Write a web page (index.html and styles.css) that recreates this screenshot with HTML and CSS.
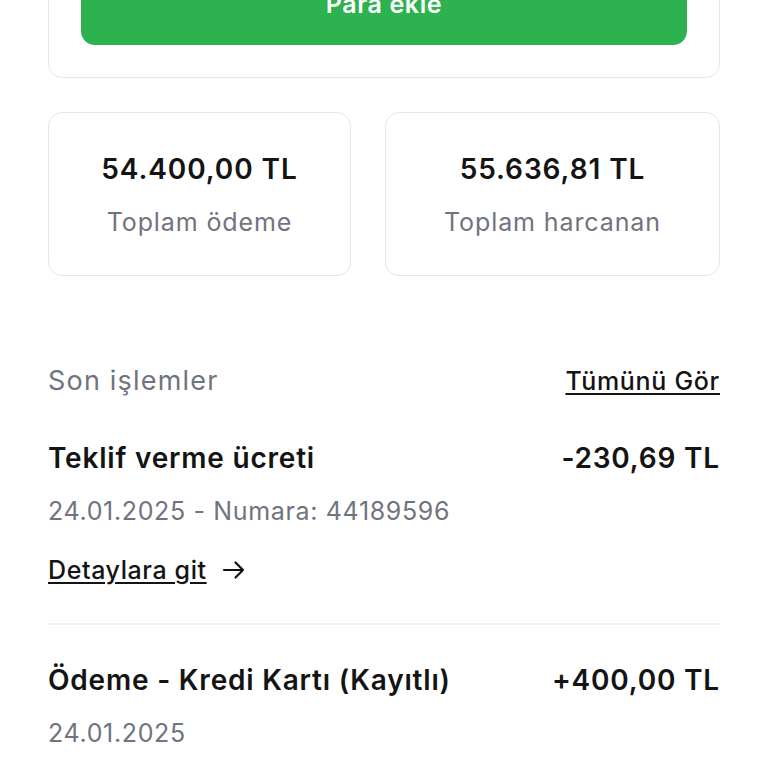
FILE: index.html
```html
<!DOCTYPE html>
<html lang="tr">
<head>
<meta charset="utf-8">
<title>Cüzdan</title>
<link rel="stylesheet" href="styles.css">
</head>
<body>
<main class="page">
  <section class="topup-card">
    <button class="btn-primary">Para ekle</button>
  </section>

  <section class="stats">
    <div class="stat-card">
      <div class="stat-value">54.400,00 TL</div>
      <div class="stat-label">Toplam ödeme</div>
    </div>
    <div class="stat-card">
      <div class="stat-value">55.636,81 TL</div>
      <div class="stat-label">Toplam harcanan</div>
    </div>
  </section>

  <section class="recent">
    <header class="recent-head">
      <h2 class="recent-title">Son işlemler</h2>
      <a class="see-all" href="#">Tümünü Gör</a>
    </header>

    <article class="tx">
      <div class="tx-row">
        <span class="tx-name">Teklif verme ücreti</span>
        <span class="tx-amount">-230,69 TL</span>
      </div>
      <div class="tx-meta">24.01.2025 - Numara: 44189596</div>
      <a class="tx-link" href="#"><span class="tx-link-text">Detaylara git</span>
        <svg class="arrow" width="24" height="20" viewBox="0 0 24 20" fill="none" stroke="#111" stroke-width="2.2" stroke-linecap="round" stroke-linejoin="round"><path d="M2 10h19M13.5 2.5 21 10l-7.5 7.5"/></svg>
      </a>
    </article>

    <article class="tx tx-last">
      <div class="tx-row">
        <span class="tx-name">Ödeme - Kredi Kartı (Kayıtlı)</span>
        <span class="tx-amount">+400,00 TL</span>
      </div>
      <div class="tx-meta">24.01.2025</div>
    </article>
  </section>
</main>
</body>
</html>
```

FILE: styles.css
```css
* { box-sizing: border-box; }

html, body {
  margin: 0;
  padding: 0;
  background: #ffffff;
  font-family: Inter, "Noto Sans", "Liberation Sans", sans-serif;
  color: #141414;
}

.page {
  width: 768px;
  padding: 0 48px;
  display: flex;
  flex-direction: column;
}

.topup-card {
  margin-top: -76px;
  border: 1px solid #e6e7ea;
  border-radius: 14px;
  padding: 32px;
  display: flex;
}

.btn-primary {
  flex: 1;
  height: 88px;
  border: 0;
  border-radius: 14px;
  background: #2db24f;
  color: #ffffff;
  font-family: inherit;
  font-size: 25px;
  font-weight: 600;
  letter-spacing: 0.6px;
  padding: 5px 0 0;
  display: flex;
  align-items: center;
  justify-content: center;
}

.stats {
  margin-top: 34px;
  display: grid;
  grid-template-columns: 303fr 335fr;
  gap: 34px;
}

.stat-card {
  border: 1px solid #e6e7ea;
  border-radius: 14px;
  height: 164px;
  padding-top: 38px;
  display: flex;
  flex-direction: column;
  align-items: center;
}

.stat-value {
  font-size: 28px;
  line-height: 36px;
  font-weight: 600;
  letter-spacing: 0.9px;
  color: #141414;
}

.stat-label {
  margin-top: 19px;
  font-size: 25px;
  line-height: 32px;
  letter-spacing: 0.9px;
  color: #6f747e;
}

.recent {
  margin-top: 88px;
  display: flex;
  flex-direction: column;
}

.recent-head {
  display: flex;
  justify-content: space-between;
  align-items: center;
  height: 34px;
}

.recent-title {
  margin: 0;
  font-size: 27px;
  line-height: 34px;
  font-weight: 400;
  letter-spacing: 1.2px;
  color: #6f747e;
}

.see-all {
  font-size: 25px;
  line-height: 30px;
  font-weight: 500;
  letter-spacing: 0.7px;
  color: #141414;
  text-decoration: underline;
  text-underline-offset: 3px;
  text-decoration-thickness: 2px;
}

.tx {
  display: flex;
  flex-direction: column;
  padding-top: 42px;
  padding-bottom: 37px;
  border-bottom: 2px solid #f1f2f4;
}

.tx-last {
  padding-top: 37px;
  border-bottom: 0;
}

.tx-row {
  display: flex;
  justify-content: space-between;
  align-items: center;
}

.tx-name,
.tx-amount {
  font-size: 28px;
  line-height: 36px;
  font-weight: 600;
  letter-spacing: 0.8px;
  color: #141414;
}

.tx-meta {
  margin-top: 18px;
  font-size: 25px;
  line-height: 34px;
  letter-spacing: 0.65px;
  color: #6f747e;
}

.tx-link {
  margin-top: 26px;
  display: flex;
  align-items: center;
  gap: 15px;
  color: #141414;
  text-decoration: none;
  font-size: 25px;
  line-height: 32px;
  font-weight: 500;
  letter-spacing: 0.6px;
}

.tx-link-text {
  text-decoration: underline;
  text-underline-offset: 3px;
  text-decoration-thickness: 2px;
}

.arrow { display: block; }
```
